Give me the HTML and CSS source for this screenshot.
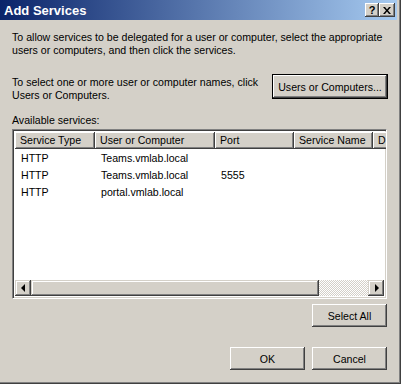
FILE: index.html
```html
<!DOCTYPE html>
<html lang="en">
<head>
    <meta charset="UTF-8">
    <title>Add Services</title>
    <link rel="stylesheet" href="styles.css">
</head>
<body>
    <div class="window">
        <div class="titlebar">
            <span class="title">Add Services</span>
            <div class="caption-buttons">
                <button class="cap-btn cap-help">?</button>
                <button class="cap-btn cap-close">
                    <svg width="8" height="7" viewBox="0 0 8 7">
                        <path d="M0 0h2l2 2.5L6 0h2L5 3.5 8 7H6L4 4.5 2 7H0l3-3.5z" fill="#000"/>
                    </svg>
                </button>
            </div>
        </div>
        <div class="dialog-body">
            <p class="intro">To allow services to be delegated for a user or computer, select the appropriate<br>users or computers, and then click the services.</p>

            <div class="select-row">
                <p>To select one or more user or computer names, click<br>Users or Computers.</p>
                <button class="btn btn-default">Users or Computers...</button>
            </div>

            <div class="list-label">Available services:</div>
            <div class="listview">
                <div class="lv-header">
                    <div class="lv-col col-type">Service Type</div>
                    <div class="lv-col col-user">User or Computer</div>
                    <div class="lv-col col-port">Port</div>
                    <div class="lv-col col-name">Service Name</div>
                    <div class="lv-col col-d">D</div>
                </div>
                <div class="lv-rows">
                    <div class="lv-row">
                        <span class="col-type">HTTP</span>
                        <span class="col-user">Teams.vmlab.local</span>
                        <span class="col-port"></span>
                    </div>
                    <div class="lv-row">
                        <span class="col-type">HTTP</span>
                        <span class="col-user">Teams.vmlab.local</span>
                        <span class="col-port">5555</span>
                    </div>
                    <div class="lv-row">
                        <span class="col-type">HTTP</span>
                        <span class="col-user">portal.vmlab.local</span>
                        <span class="col-port"></span>
                    </div>
                </div>
                <div class="hscroll">
                    <div class="sb-btn"><span class="arrow-left"></span></div>
                    <div class="sb-thumb"></div>
                    <div class="sb-track"></div>
                    <div class="sb-btn"><span class="arrow-right"></span></div>
                </div>
            </div>

            <div class="select-all-row">
                <button class="btn">Select All</button>
            </div>

            <div class="dialog-buttons">
                <button class="btn">OK</button>
                <button class="btn">Cancel</button>
            </div>
        </div>
    </div>
</body>
</html>
```

FILE: styles.css
```css
body {
    margin: 0;
    background-color: #d4d0c8;
    font-family: Tahoma, 'Liberation Sans', Arial, sans-serif;
    font-size: 10.6px;
    color: #000;
}
.window {
    width: 401px;
    height: 384px;
    box-sizing: border-box;
    background-color: #d4d0c8;
    border-right: 1px solid #404040;
    border-bottom: 1px solid #404040;
    box-shadow: inset -1px -1px #808080;
    display: flex;
    flex-direction: column;
    overflow: hidden;
}
.titlebar {
    height: 20px;
    flex: none;
    margin-right: 3px;
    display: flex;
    align-items: center;
    justify-content: space-between;
    background: linear-gradient(to right, #0a246a, #a6caf0);
    padding-left: 4px;
    padding-right: 2px;
}
.title {
    color: #fff;
    font-weight: bold;
    font-size: 13px;
}
.caption-buttons {
    display: flex;
    gap: 0;
}
.cap-btn {
    width: 16px;
    height: 14px;
    padding: 0;
    border: none;
    background-color: #d4d0c8;
    box-shadow: inset -1px -1px #404040, inset 1px 1px #fff, inset -2px -2px #808080;
    font-family: 'Liberation Sans', Arial, sans-serif;
    font-weight: bold;
    font-size: 11px;
    line-height: 14px;
    display: flex;
    align-items: center;
    justify-content: center;
}
.cap-help {
    width: 14px;
}
.dialog-body {
    flex: 1;
    padding: 10px 13px 0 12px;
    display: flex;
    flex-direction: column;
}
p {
    margin: 0;
    line-height: 13px;
    white-space: nowrap;
}
.intro {
    margin-top: 1px;
}
.select-row {
    display: flex;
    justify-content: space-between;
    align-items: flex-start;
    margin-top: 17px;
}
.select-row p {
    margin-top: 2px;
}
.btn {
    width: 75px;
    height: 23px;
    padding: 0;
    border: none;
    background-color: #d4d0c8;
    box-shadow: inset -1px -1px #404040, inset 1px 1px #fff, inset -2px -2px #808080;
    font-family: inherit;
    font-size: 10.6px;
    color: #000;
    flex: none;
}
.btn-default {
    width: 116px;
    height: 25px;
    border: 1px solid #000;
    margin-right: -1px;
}
.list-label {
    margin-top: 12px;
    line-height: 13px;
}
.listview {
    margin-top: 2px;
    height: 170px;
    flex: none;
    box-sizing: border-box;
    background-color: #fff;
    border: 1px solid;
    border-color: #808080 #fff #fff #808080;
    box-shadow: inset 1px 1px #404040, inset -1px -1px #d4d0c8;
    padding: 2px;
    display: flex;
    flex-direction: column;
    overflow: hidden;
}
.lv-header {
    display: flex;
    height: 17px;
    flex: none;
}
.lv-col {
    box-sizing: border-box;
    height: 17px;
    line-height: 16px;
    padding-left: 5px;
    background-color: #d4d0c8;
    box-shadow: inset -1px -1px #404040, inset 1px 1px #fff, inset -2px -2px #808080;
    white-space: nowrap;
    overflow: hidden;
}
.col-type { width: 80px; flex: none; }
.col-user { width: 120px; flex: none; }
.col-port { width: 79px; flex: none; }
.col-name { width: 79px; flex: none; }
.col-d { width: 40px; flex: none; }
.lv-rows {
    flex: 1;
    padding-top: 1px;
}
.lv-row {
    display: flex;
    height: 17px;
    line-height: 17px;
}
.lv-row span {
    padding-left: 6px;
    box-sizing: border-box;
}
.hscroll {
    display: flex;
    height: 16px;
    flex: none;
}
.sb-btn {
    width: 16px;
    height: 16px;
    flex: none;
    box-sizing: border-box;
    background-color: #d4d0c8;
    box-shadow: inset -1px -1px #404040, inset 1px 1px #d4d0c8, inset -2px -2px #808080, inset 2px 2px #fff;
    display: flex;
    align-items: center;
    justify-content: center;
}
.arrow-left {
    width: 0;
    height: 0;
    border-top: 4px solid transparent;
    border-bottom: 4px solid transparent;
    border-right: 4px solid #000;
    margin-left: -1px;
}
.arrow-right {
    width: 0;
    height: 0;
    border-top: 4px solid transparent;
    border-bottom: 4px solid transparent;
    border-left: 4px solid #000;
    margin-left: 1px;
}
.sb-thumb {
    width: 288px;
    flex: none;
    background-color: #d4d0c8;
    box-shadow: inset -1px -1px #404040, inset 1px 1px #d4d0c8, inset -2px -2px #808080, inset 2px 2px #fff;
}
.sb-track {
    flex: 1;
    background: repeating-conic-gradient(#fff 0 25%, #d4d0c8 0 50%) 0 0 / 2px 2px;
}
.select-all-row {
    display: flex;
    justify-content: flex-end;
    margin-top: 5px;
}
.dialog-buttons {
    display: flex;
    justify-content: flex-end;
    gap: 7px;
    margin-top: 20px;
}
```
